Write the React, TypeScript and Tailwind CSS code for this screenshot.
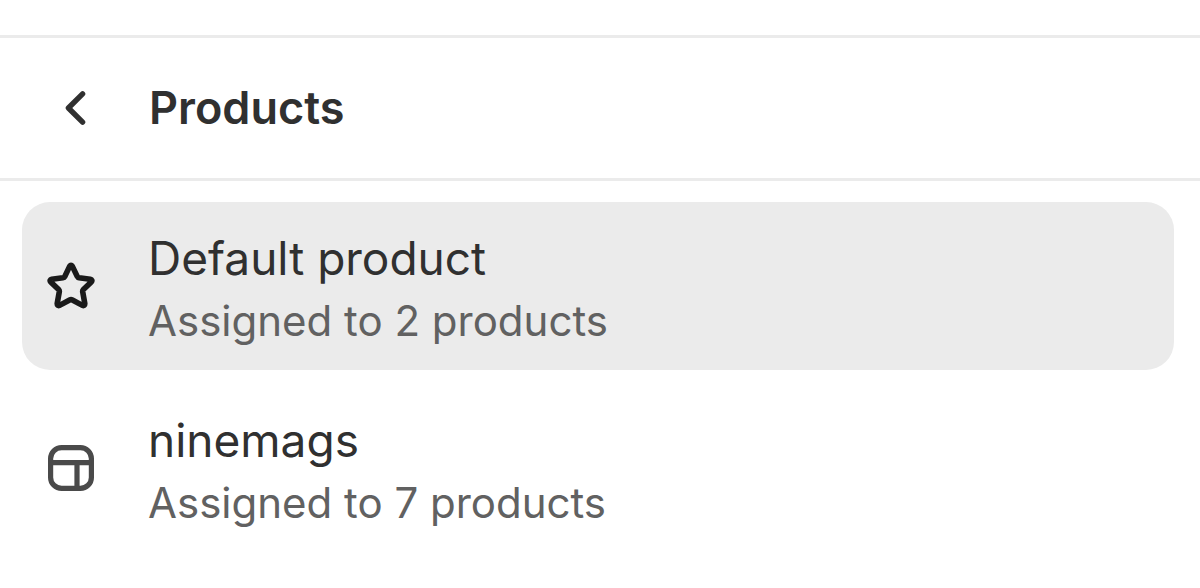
import type { ReactNode } from "react";

type Template = { id: string; name: string; meta: string; icon: ReactNode; active?: boolean };

function ChevronLeftIcon() {
  return (
    <svg className="size-12" viewBox="0 0 48 48" fill="none" stroke="#303030" strokeWidth="5.4" strokeLinecap="round" strokeLinejoin="round" aria-hidden="true">
      <path d="M34.6 9.8 20.4 24 34.6 38.2" />
    </svg>
  );
}

function StarIcon() {
  return (
    <svg className="size-12 shrink-0" viewBox="0 0 48 48" fill="none" stroke="#1a1a1a" strokeWidth="5.6" strokeLinejoin="round" aria-hidden="true">
      <path d="M22.6 4.4Q24 2.4 25.4 4.4L30.2 14.4Q30.8 15.6 32.1 15.8L43.2 17.3Q45.9 18 44.3 19.9L36.4 27.6Q35.5 28.5 35.7 29.8L37.8 41.6Q37.9 44.2 35.4 43.4L25.4 38Q24 37.3 22.6 38L12.6 43.4Q10.1 44.2 10.2 41.6L12.3 29.8Q12.5 28.5 11.6 27.6L3.7 19.9Q2.1 18 4.8 17.3L15.9 15.8Q17.2 15.6 17.8 14.4Z" />
    </svg>
  );
}

function LayoutIcon() {
  return (
    <svg className="size-12 shrink-0" viewBox="0 0 48 48" fill="none" stroke="#4a4a4a" strokeWidth="5.2" aria-hidden="true">
      <rect x="3.6" y="3.6" width="40.8" height="40.8" rx="11" />
      <path d="M3.6 18.6h40.8M30 18.6v25.8" />
    </svg>
  );
}

const templates: Template[] = [
  { id: "default", name: "Default product", meta: "Assigned to 2 products", icon: <StarIcon />, active: true },
  { id: "ninemags", name: "ninemags", meta: "Assigned to 7 products", icon: <LayoutIcon /> },
];

export default function App() {
  return (
    <main className="min-h-screen bg-white pt-[35px] font-['Inter',sans-serif] text-[#303030]">
      <header className="flex items-center gap-[53px] border-y-[3px] border-[#ebebeb] px-12 py-[38px]">
        <button type="button" aria-label="Back" className="shrink-0"><ChevronLeftIcon /></button>
        <h1 className="text-[45px] leading-16 font-semibold">Products</h1>
      </header>
      <ul className="flex flex-col gap-3.5 pt-[21px] pr-[26px] pl-[22px]">
        {templates.map((item) => (
          <li key={item.id}>
            <button type="button" className={`flex w-full items-center gap-[53px] rounded-[28px] px-[25px] py-[21px] text-left ${item.active ? "bg-[#ebebeb]" : "bg-white"}`}>
              {item.icon}
              <span className="flex flex-col">
                <span className="text-[46px] leading-[70px]">{item.name}</span>
                <span className="text-[42px] leading-14 text-[#616161]">{item.meta}</span>
              </span>
            </button>
          </li>
        ))}
      </ul>
    </main>
  );
}
